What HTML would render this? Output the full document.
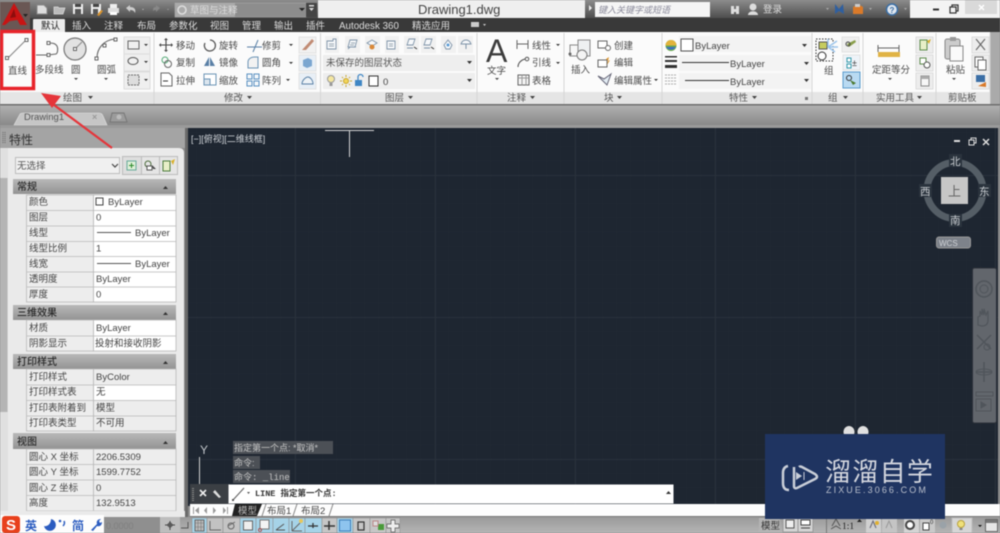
<!DOCTYPE html>
<html lang="zh"><head><meta charset="utf-8"><title>Drawing1.dwg</title>
<style>
html,body{margin:0;padding:0;width:1000px;height:533px;overflow:hidden;background:#8a8a8a}
svg{display:block;filter:blur(.55px)}
text{font-family:"Liberation Sans","Noto Sans CJK SC",sans-serif;font-size:9.5px;fill:#3a3a3a}
.t{fill:#ddd;font-size:9.5px}.k{fill:#4a4a4a;font-size:9.5px}
.p{fill:#555;font-size:9.5px}.h{fill:#2a2a2a;font-size:10px;font-weight:500}
.v{fill:#444;font-size:9.5px}.m{font-family:"Liberation Mono","Noto Sans CJK SC",monospace}
</style></head><body>
<svg width="1000" height="533" viewBox="0 0 1000 533" xmlns="http://www.w3.org/2000/svg">
<defs>
<linearGradient id="g1" x1="0" y1="0" x2="0" y2="1"><stop offset="0" stop-color="#8c8c8c"/><stop offset="1" stop-color="#4e4e4e"/></linearGradient>
<linearGradient id="g2" x1="0" y1="0" x2="0" y2="1"><stop offset="0" stop-color="#b0b0b0"/><stop offset="1" stop-color="#888"/></linearGradient>
<linearGradient id="g3" x1="0" y1="0" x2="0" y2="1"><stop offset="0" stop-color="#b8b8b8"/><stop offset="1" stop-color="#939393"/></linearGradient>
<linearGradient id="g4" x1="0" y1="0" x2="0" y2="1"><stop offset="0" stop-color="#9a9a9a"/><stop offset="1" stop-color="#b5b5b5"/></linearGradient>
<pattern id="minor" width="14" height="14.2" patternUnits="userSpaceOnUse" x="15" y="5"><path d="M14 0V14.2M0 14.2H14" stroke="#232b35" stroke-width=".5" fill="none"/></pattern>
<pattern id="major" width="140" height="142" patternUnits="userSpaceOnUse" x="15" y="33"><path d="M.5 0V142M0 .5H140" stroke="#29313c" stroke-width="1" fill="none"/></pattern>
</defs>

<!-- base -->
<rect width="1000" height="533" fill="#8c8c8c"/>
<!-- title bar -->
<rect x="0" width="1000" height="18" fill="url(#g1)"/>
<rect x="318" width="267" height="18" fill="#efefef"/>
<rect x="910" width="90" height="18" fill="#f3f3f3"/>
<rect x="965" y="0" width="32" height="14" fill="#d9d9d9"/>
<text x="418" y="14" style="font-size:13px;fill:#444">Drawing1.dwg</text>
<!-- tab bar -->
<rect x="30" y="18" width="970" height="14" fill="#393939"/>
<!-- qat -->
<path d="M37 5h7l3 3v6H37z" fill="#ddd" stroke="#888"/>
<path d="M54 7h4l1 1h6l-2 6H54z" fill="#bbb" stroke="#ddd" stroke-width=".7"/>
<rect x="73" y="4" width="10" height="10" fill="#eee"/><rect x="75" y="4" width="6" height="3" fill="#444"/><rect x="75" y="9" width="6" height="5" fill="#555"/>
<rect x="91" y="4" width="10" height="10" fill="#eee"/><rect x="93" y="4" width="6" height="3" fill="#444"/><rect x="93" y="9" width="5" height="5" fill="#555"/><path d="M97 15l4-5 2 1-4 5z" fill="#d9922a"/>
<path d="M108 8h11v5h-11z" fill="#ddd"/><rect x="110" y="4" width="7" height="4" fill="#eee"/><rect x="110" y="12" width="7" height="3" fill="#fff"/>
<path d="M126 8l4-3v2c5 0 6 3 5 6-1-2-2-3-5-3v2z" fill="#ccc"/><path d="M142 9l2 0-1 1z" fill="#ccc"/>
<path d="M160 8l-4-3v2c-3 0-3 2-3 4 1-1 2-1 3-1v2z" fill="#888"/><path d="M167 9l2 0-1 1z" fill="#aaa"/>
<rect x="175" y="3" width="131" height="14" fill="#8d8d8d" stroke="#aaa" stroke-width=".6"/><rect x="175" y="3" width="60" height="14" fill="#aaa"/>
<circle cx="182" cy="10" r="4" fill="none" stroke="#ddd" stroke-width="1.6"/>
<text x="190" y="13.5" style="fill:#ddd;font-size:9.5px">草图与注释</text>
<path d="M299 8h6l-3 3z" fill="#222"/>
<rect x="306" y="3" width="11" height="14" fill="#444"/><path d="M309 5h5v1.5h-5zM309 8h5l-2.500 3z" fill="#ddd"/>
<!-- logo -->
<rect x="0" y="0" width="30" height="30" fill="#6a5754"/><rect x="0" y="0" width="30" height="2" fill="#8a8a8a"/>
<path d="M14 3L27 25H20L17.500 20L10 21L5 25H2z" fill="#c81414"/><path d="M14 9L10 18L16 17z" fill="#8e0d0d"/>
<path d="M23 14h5l-2.500 3z" fill="#222"/>
<!-- search -->
<rect x="585" y="0" width="325" height="18" fill="url(#g1)"/>
<path d="M589 5l3 3-3 3z" fill="#eee"/>
<rect x="595" y="2" width="115" height="15" fill="#f5f5f5"/>
<text x="598" y="13" style="font-size:9px;fill:#8a8a9a;font-style:italic">键入关键字或短语</text>
<path d="M731 6h3v8h-3zM736 6h3v8h-3zM733 9h4v3h-4z" fill="#ddd"/>
<circle cx="753" cy="7" r="3.500" fill="#ddd"/><path d="M748 15c0-5 10-5 10 0z" fill="#ddd"/>
<text x="763" y="12.500" style="fill:#ddd;font-size:9.500px">登录</text>
<path d="M826 8h3l-1.500 2z" fill="#aaa"/>
<path d="M835 4l4 5 4-5 1 10-5-3-4 3z" fill="#2f5f9f"/>
<path d="M853 7l5-3 5 3v7h-10z" fill="#d97a2a"/><rect x="855" y="4" width="5" height="3" fill="#ccc"/>
<path d="M869 8h3l-1.500 2z" fill="#aaa"/>
<circle cx="892" cy="9.500" r="5.500" fill="#dfe6ee" stroke="#3a6ea5" stroke-width="1.500"/><text x="889.500" y="13" style="font-size:8px;font-weight:700;fill:#3a6ea5">?</text>
<path d="M904 8h3l-1.500 2z" fill="#aaa"/>
<rect x="933" y="8.500" width="6" height="2" fill="#333"/>
<rect x="952" y="5" width="6" height="6" fill="none" stroke="#333" stroke-width="1.200"/><rect x="950" y="7" width="6" height="6" fill="#f3f3f3" stroke="#333" stroke-width="1.200"/>
<path d="M979 5l5 5M984 5l-5 5" stroke="#fff" stroke-width="1.500"/>

<!-- tabs -->
<path d="M33 32v-12q0-1 1-1h30q1 0 1 1v12z" fill="#ececec"/>
<text x="41" y="29" style="fill:#222;font-size:9.500px">默认</text>
<text x="72" y="29" class="t">插入</text><text x="104" y="29" class="t">注释</text><text x="137" y="29" class="t">布局</text>
<text x="169" y="29" class="t">参数化</text><text x="210" y="29" class="t">视图</text><text x="242" y="29" class="t">管理</text>
<text x="274" y="29" class="t">输出</text><text x="306" y="29" class="t">插件</text>
<text x="339" y="29" class="t" style="font-size:9.800px">Autodesk 360</text><text x="412" y="29" class="t">精选应用</text>
<rect x="471" y="22" width="8" height="5" fill="#ccc"/><path d="M483 24h3l-1.500 2z" fill="#ccc"/>

<!-- ribbon -->
<rect x="0" y="32" width="1000" height="73" fill="#fbfbfb"/>
<rect x="0" y="92" width="990" height="13" fill="#e5e5e5"/>
<rect x="990" y="32" width="10" height="73" fill="#aaa"/>
<rect x="0" y="104" width="1000" height="1.500" fill="#6f6f6f"/>
<path d="M154 33v71M320.500 33v71M477 33v71M564 33v71M662 33v71M812 33v71M863 33v71M936 33v71M990 33v71" stroke="#d5d5d5"/>
<text x="63" y="101" class="p">绘图</text><path d="M88 96h5l-2.500 3z" fill="#444"/>
<text x="224" y="101" class="p">修改</text><path d="M247 96h5l-2.500 3z" fill="#444"/>
<text x="385" y="101" class="p">图层</text><path d="M408 96h5l-2.500 3z" fill="#444"/>
<text x="507" y="101" class="p">注释</text><path d="M530 96h5l-2.500 3z" fill="#444"/>
<text x="604" y="101" class="p">块</text><path d="M617 96h5l-2.500 3z" fill="#444"/>
<text x="729" y="101" class="p">特性</text><path d="M752 96h5l-2.500 3z" fill="#444"/><rect x="805" y="97" width="3" height="3" fill="#777"/>
<text x="828" y="101" class="p">组</text><path d="M843 96h5l-2.500 3z" fill="#444"/>
<text x="876" y="101" class="p">实用工具</text><path d="M917 96h5l-2.500 3z" fill="#444"/>
<text x="948" y="101" class="p">剪贴板</text>

<!-- draw panel -->
<path d="M8 58L26 40" stroke="#888" stroke-width="1.100"/><rect x="5.500" y="56.500" width="3" height="3" fill="#fff" stroke="#666"/><rect x="25" y="38.500" width="3" height="3" fill="#fff" stroke="#666"/>
<text x="8" y="74" class="k">直线</text>
<path d="M36 55h12l8-1c2-1 2-6 1-8-2-3-5-3-8-3" fill="none" stroke="#666" stroke-width="1.100"/>
<rect x="47" y="41.500" width="3" height="3" fill="#fff" stroke="#666"/><rect x="47" y="53.500" width="3" height="3" fill="#fff" stroke="#666"/>
<text x="35" y="73" class="k">多段线</text>
<circle cx="75" cy="49" r="11" fill="#e2e2e2" stroke="#777" stroke-width="1.200"/><path d="M75 49l7-7" stroke="#888"/><rect x="73.500" y="47.500" width="3" height="3" fill="#fff" stroke="#666"/>
<text x="71" y="73" class="k">圆</text><path d="M74 78h4l-2 2z" fill="#444"/>
<path d="M97 58c0-10 7-18 18-19" fill="none" stroke="#666" stroke-width="1.100"/><rect x="95" y="57" width="3" height="3" fill="#fff" stroke="#666"/><rect x="114" y="38" width="3" height="3" fill="#fff" stroke="#666"/><rect x="103" y="44" width="3" height="3" fill="#fff" stroke="#666"/>
<text x="97" y="73" class="k">圆弧</text><path d="M104 78h4l-2 2z" fill="#444"/>
<rect x="124" y="37" width="26" height="17" fill="#efefef" stroke="#ddd"/><rect x="128" y="41" width="11" height="8" fill="none" stroke="#666"/><path d="M144 44h4l-2 2z" fill="#333"/>
<rect x="124" y="54" width="26" height="17" fill="#efefef" stroke="#ddd"/><ellipse cx="133" cy="61" rx="5" ry="3.500" fill="none" stroke="#555"/><path d="M144 61h4l-2 2z" fill="#333"/>
<rect x="124" y="72" width="26" height="17" fill="#efefef" stroke="#ddd"/><rect x="128" y="75" width="11" height="10" fill="#ddd" stroke="#666" stroke-dasharray="2 1"/><path d="M144 79h4l-2 2z" fill="#333"/>

<!-- modify -->
<path d="M166 40v10M161 45h10" stroke="#444" stroke-width="1.100"/><path d="M166 38l2 2h-4zM166 52l2-2h-4zM159 45l2-2v4zM173 45l-2-2v4z" fill="#444"/>
<text x="176" y="49" class="k">移动</text>
<circle cx="165" cy="60" r="3" fill="none" stroke="#5a7"/><circle cx="168" cy="64" r="3.500" fill="none" stroke="#666"/>
<text x="176" y="66" class="k">复制</text>
<path d="M161 73h8l3 3v10h-11z" fill="#fff" stroke="#666"/><path d="M163 81h5" stroke="#333"/>
<text x="176" y="84" class="k">拉伸</text>
<path d="M210 40a5.500 5.500 0 1 1-5 3" fill="none" stroke="#555" stroke-width="1.300"/>
<text x="219" y="49" class="k">旋转</text>
<path d="M209 57l-5 9h5zM210 57l5 9h-5z" fill="#5a80a6"/>
<text x="219" y="66" class="k">镜像</text>
<rect x="204" y="74" width="12" height="11" fill="#fff" stroke="#6a93b5"/><rect x="204" y="79" width="6" height="6" fill="#dbe5ee" stroke="#6a93b5"/>
<text x="219" y="84" class="k">缩放</text>
<path d="M247 47h15M258 40l-5 12" stroke="#5a80a6" fill="none"/>
<text x="262" y="49" class="k">修剪</text><path d="M289 44h4l-2 2z" fill="#333"/>
<path d="M248 68v-6c0-3 3-5 6-5h4v11z" fill="#f2f2f2" stroke="#6a93b5"/>
<text x="262" y="66" class="k">圆角</text><path d="M289 62h4l-2 2z" fill="#333"/>
<path d="M247 74h5v5h-5zM254 74h5v5h-5zM247 81h5v5h-5zM254 81h5v5h-5z" fill="#f4f8fb" stroke="#5a90c0"/>
<text x="262" y="84" class="k">阵列</text><path d="M286 79h4l-2 2z" fill="#333"/>
<rect x="299" y="37" width="17" height="16" fill="#f1f1f1" stroke="#e2e2e2"/><path d="M302 50l10-11 2 2-8 9z" fill="#c08a72"/>
<rect x="299" y="55" width="17" height="16" fill="#e8eff6" stroke="#e2e2e2"/><path d="M303 60l5-2 4 2v6l-5 2-4-2z" fill="#7ba6d0"/>
<rect x="299" y="73" width="17" height="16" fill="#e8eff6" stroke="#e2e2e2"/><path d="M302 84c0-4 4-7 6-7s5 3 5 7z" fill="#eef3f7" stroke="#5a80a6"/>

<!-- layer -->
<g fill="#f1f1f1"><rect x="325" y="36" width="14" height="17"/><rect x="345" y="36" width="15" height="17"/><rect x="365" y="36" width="15" height="17"/><rect x="385" y="36" width="14" height="17"/><rect x="404" y="36" width="15" height="17"/><rect x="421" y="36" width="15" height="17"/><rect x="441" y="36" width="15" height="17"/><rect x="458" y="36" width="15" height="17"/></g>
<g fill="#f7f9fb" stroke="#7e93a8" stroke-width=".9">
<path d="M327 41h6v-2h3v10h-9z"/><path d="M348 47l2-7h7l-2 7zM348 49l2-2h6"/><path d="M367 43l5-3 5 3-5 3z"/><path d="M387 41h8v8h-8z"/><path d="M407 45l2-6h6l-2 6zM407 48h6"/><path d="M424 45l2-6h6l-2 6zM424 48h6"/><path d="M444 45l4-5 4 5-2 4h-4z"/><path d="M461 44c1-3 3-4 5-4s4 1 5 4z"/>
</g>
<path d="M329 44h5M329 46h5M351 43h4M350 45h4M389 44h4M389 46h4" stroke="#7a8a9a" stroke-width=".7"/>
<circle cx="372" cy="47" r="2.500" fill="#d9893a"/><path d="M414 47l3 2M431 47l3 2" stroke="#333"/><circle cx="448" cy="45" r="1.500" fill="#5a9bd5"/><path d="M466 44v5" stroke="#7e93a8"/>
<rect x="323" y="55" width="152" height="16" fill="#eeeeee"/>
<text x="326" y="66" style="font-size:9.500px;fill:#555">未保存的图层状态</text>
<path d="M467 61h5l-2.500 3z" fill="#333"/>
<rect x="323" y="73" width="152" height="16" fill="#eeeeee"/>
<circle cx="331" cy="79" r="3.500" fill="#f4e6a0" stroke="#999"/><rect x="329.500" y="83" width="3" height="3" fill="#999"/>
<circle cx="346" cy="81" r="2.500" fill="#f3d65a" stroke="#c9a52a"/><path d="M346 75v2M346 85v2M340 81h2M350 81h2M342 77l1 1M349 84l1 1M342 85l1-1M349 78l1-1" stroke="#c9a52a"/>
<rect x="355" y="80" width="7" height="6" fill="#3f86c4"/><path d="M358 80v-3a2.500 2.500 0 0 1 5 0" fill="none" stroke="#3f86c4" stroke-width="1.200"/>
<rect x="369" y="76" width="9" height="10" fill="#fff" stroke="#333"/>
<text x="383" y="85" style="font-size:9.500px;fill:#444">0</text><path d="M467 79h5l-2.500 3z" fill="#333"/>

<!-- annotate -->
<text x="486" y="62" style="font-size:32px;fill:#3c3c3c">A</text>
<text x="487" y="74" class="k">文字</text><path d="M495 78h4l-2 2z" fill="#444"/>
<path d="M517 40v9M528 40v9M517 44h11" stroke="#666" fill="none"/><text x="532" y="49" class="k">线性</text><path d="M556 44h4l-2 2z" fill="#333"/>
<path d="M518 67c0-4 3-7 7-8" fill="none" stroke="#555" stroke-width="1.100"/><circle cx="527" cy="59" r="1.800" fill="none" stroke="#555"/><text x="532" y="66" class="k">引线</text><path d="M556 62h4l-2 2z" fill="#333"/>
<rect x="518" y="75" width="11" height="10" fill="#f4f4f4" stroke="#666"/><path d="M518 78h11M522 75v10M526 75v10" stroke="#999"/><text x="532" y="84" class="k">表格</text>

<!-- block -->
<rect x="570" y="45" width="19" height="11" fill="#f7f7f7" stroke="#888"/><rect x="578" y="40" width="12" height="16" fill="#eef0f2" stroke="#888"/><circle cx="582" cy="55" r="5" fill="#f4f4f4" stroke="#777"/><circle cx="570" cy="54" r="1.500" fill="#666"/>
<text x="571" y="73" class="k">插入</text>
<rect x="598" y="41" width="9" height="7" fill="#fff" stroke="#666"/><circle cx="608" cy="48" r="2.500" fill="#fff" stroke="#666"/><text x="614" y="49" class="k">创建</text>
<rect x="598" y="60" width="9" height="7" fill="#fff" stroke="#666"/><path d="M606 59l3-2-1 4 2-1-3 5 1-4z" fill="#d9922a"/><text x="614" y="66" class="k">编辑</text>
<path d="M598 76l6 3 7-5-4 11z" fill="#e3ecf3" stroke="#667"/><text x="614" y="84" class="k">编辑属性</text><path d="M654 79h4l-2 2z" fill="#333"/>

<!-- properties -->
<circle cx="671" cy="45.500" r="5.500" fill="#6aa84f"/><path d="M665.500 45.500a5.500 5.500 0 0 1 11 0z" fill="#e2b33a"/><path d="M666 47a6 6 0 0 0 10 0z" fill="#3b6fc4"/>
<rect x="679" y="36" width="132" height="16" fill="#f3f3f3"/>
<rect x="681" y="39" width="12" height="12" fill="#fff" stroke="#555"/>
<text x="695" y="49" class="v">ByLayer</text><path d="M802 44h5l-2.500 3z" fill="#333"/>
<path d="M665 56h12v1.500h-12zM665 60h12v2h-12zM665 65h12v3h-12z" fill="#333"/>
<rect x="679" y="55" width="132" height="16" fill="#f3f3f3"/>
<path d="M682 62.500h47" stroke="#333"/>
<text x="730" y="67" class="v">ByLayer</text><path d="M804 62h5l-2.500 3z" fill="#333"/>
<path d="M665 75h12M665 78h12M665 81h12M665 84h12" stroke="#aaa" stroke-dasharray="2 1"/>
<rect x="679" y="73" width="132" height="16" fill="#f3f3f3"/>
<path d="M685 80.500h44" stroke="#333"/>
<text x="730" y="85" class="v">ByLayer</text><path d="M804 79h5l-2.500 3z" fill="#333"/>

<!-- group -->
<rect x="816" y="39" width="17" height="22" fill="none" stroke="#333" stroke-dasharray="1.500 1.500"/>
<rect x="819" y="42" width="8" height="7" fill="#c6cc5e" stroke="#555"/><circle cx="822" cy="56" r="4" fill="#fff" stroke="#333"/>
<path d="M828 47l9-6M828 47l10 0M828 47l7 5M828 47l0-8" stroke="#9cc5ec" stroke-width="1.500"/>
<text x="824" y="74" class="k">组</text>
<rect x="842" y="37" width="17" height="15" fill="#eee" stroke="#e2e2e2"/><path d="M847 44l8-4 1 2-7 5z" fill="#8a9f4a"/><circle cx="848" cy="44" r="2" fill="none" stroke="#444"/>
<rect x="843" y="55" width="17" height="15" fill="#eef3f8" stroke="#e2e2e2"/><rect x="847" y="58" width="4" height="4" fill="#fff" stroke="#39a"/><rect x="847" y="64" width="4" height="4" fill="#fff" stroke="#39a"/><text x="852" y="66" style="font-size:9px">±</text>
<rect x="843" y="72" width="17" height="16" fill="#b9daf2" stroke="#5a9bcc"/><circle cx="849" cy="78" r="2.500" fill="none" stroke="#333"/><path d="M850 80l6 3-3 2z" fill="#4c7a2f"/>

<!-- utilities -->
<path d="M878 45v7M899 45v7M878 48h21" stroke="#666" fill="none"/><rect x="878" y="52" width="22" height="5" fill="#e0b345"/>
<text x="872" y="73" class="k">定距等分</text><path d="M888 78h4l-2 2z" fill="#444"/>
<rect x="916" y="37" width="17" height="16" fill="#ededed" stroke="#ddd"/><rect x="920" y="40" width="7" height="10" fill="#e8efc8" stroke="#5b8a4a"/><path d="M927 41l4-2-2 5z" fill="#d9b02a"/>
<rect x="916" y="55" width="17" height="16" fill="#ededed" stroke="#ddd"/><rect x="920" y="58" width="6" height="6" fill="#fff" stroke="#5b8a4a"/><circle cx="927" cy="65" r="3" fill="#fff" stroke="#555"/>
<rect x="916" y="73" width="17" height="16" fill="#ededed" stroke="#ddd"/><rect x="921" y="76" width="8" height="10" fill="#f7f7f7" stroke="#888"/><rect x="921" y="76" width="8" height="3" fill="#aaa"/>

<!-- clipboard -->
<rect x="945" y="39" width="15" height="20" rx="2" fill="#ccc" stroke="#888"/><rect x="950" y="37" width="6" height="4" fill="#999"/><rect x="950" y="46" width="13" height="15" fill="#fafafa" stroke="#888"/>
<text x="946" y="73" class="k">粘贴</text><path d="M952 78h4l-2 2z" fill="#444"/>
<rect x="972" y="37" width="17" height="16" fill="#ededed" stroke="#ddd"/><path d="M976 39l9 11M985 39l-9 11" stroke="#666" stroke-width="1.100"/>
<rect x="972" y="55" width="17" height="16" fill="#ededed" stroke="#ddd"/><rect x="975" y="57" width="8" height="10" fill="#fff" stroke="#666"/><rect x="978" y="60" width="8" height="10" fill="#fff" stroke="#666"/>
<rect x="972" y="73" width="17" height="16" fill="#ededed" stroke="#ddd"/><rect x="976" y="75" width="9" height="7" fill="#3a6ea5"/><path d="M978 86l8-4 0 5z" fill="#d97a2a"/>

<!-- file tabs -->
<rect x="0" y="105.500" width="1000" height="20" fill="url(#g2)"/>
<rect x="0" y="125" width="1000" height="3" fill="#9a9a9a"/>
<path d="M14 125l6-11q1-1 3-1h76q3 0 4 3l4 9z" fill="#c6c6c6" stroke="#e2e2e2" stroke-width=".6"/>
<text x="24" y="120" style="font-size:9.500px;fill:#555">Drawing1</text>
<text x="92" y="120" style="font-size:9px;fill:#999;font-weight:700">×</text>
<path d="M110 122l2-9h12l3 9z" fill="#9b9b9b" stroke="#777"/><circle cx="119" cy="117" r="2.500" fill="#bbb"/>

<!-- canvas -->
<rect x="188" y="128" width="810" height="378" fill="#1e2631"/>
<rect x="188" y="128" width="810" height="378" fill="url(#minor)"/>
<rect x="188" y="128" width="810" height="378" fill="url(#major)"/>
<path d="M325 130.500h49M349.500 130v27" stroke="#d5d5d5"/>
<text x="191" y="142" style="font-size:9px;fill:#cfd3d8">[−][俯视][二维线框]</text>
<rect x="954" y="140" width="6" height="2" fill="#ddd"/>
<rect x="971" y="138" width="5" height="5" fill="none" stroke="#ddd"/><rect x="969" y="140" width="5" height="5" fill="#1e2631" stroke="#ddd"/>
<path d="M983 139l6 6M989 139l-6 6" stroke="#ddd" stroke-width="1.500"/>
<circle cx="955" cy="190.500" r="28" fill="none" stroke="#555e66" stroke-width="7"/>
<rect x="941" y="177" width="27" height="27" fill="#c6c6c6"/>
<text x="948" y="196" style="font-size:13px;fill:#666">上</text>
<rect x="949" y="154" width="13" height="13" fill="#2a333d"/><text x="950" y="165" style="font-size:10.500px;fill:#c9cdd1">北</text>
<rect x="949" y="214" width="13" height="13" fill="#2a333d"/><text x="950" y="224" style="font-size:10.500px;fill:#c9cdd1">南</text>
<rect x="919" y="184" width="13" height="13" fill="#2a333d"/><text x="920" y="195" style="font-size:10.500px;fill:#c9cdd1">西</text>
<rect x="978" y="184" width="13" height="13" fill="#2a333d"/><text x="979" y="195" style="font-size:10.500px;fill:#c9cdd1">东</text>
<rect x="936.500" y="237" width="34" height="11" rx="2.500" fill="#7d828a" stroke="#999"/>
<text x="939" y="246" style="font-size:8px;fill:#cfd2d6">WCS</text>
<!-- nav bar -->
<rect x="972.500" y="268" width="24" height="155" rx="2" fill="#62666c" stroke="#2b3038"/>
<g fill="none" stroke="#50555b">
<circle cx="984" cy="289" r="8" stroke-width="1.500"/><circle cx="984" cy="289" r="4"/>
<path d="M978 325v-8l2-1v-5l2 4v-6l2 6v-6l2 6 2-4v9c0 5-3 6-6 6-2 0-3-1-4-1z" stroke-width="1.200"/>
<path d="M977 335l14 14M991 335l-14 14" stroke-width="1.500"/><circle cx="987" cy="347" r="3"/>
<path d="M984 362v20M976 372h16" stroke-width="1.500"/><ellipse cx="984" cy="372" rx="8" ry="3"/>
<rect x="976" y="392" width="17" height="4"/><rect x="976" y="399" width="15" height="12"/><path d="M981 402v6l5-3z" fill="#50555b"/>
</g>
<!-- ucs + history -->
<text x="200" y="454" style="font-size:12px;fill:#bfc4c8">Y</text>
<path d="M199.500 457v30" stroke="#d0d0d0"/>
<rect x="233" y="441" width="100" height="13" fill="#4c5056"/><text x="234" y="451" style="font-size:9px;fill:#c4c4c4">指定第一个点: *取消*</text>
<rect x="233" y="456" width="27" height="13" fill="#4c5056"/><text x="234" y="466" style="font-size:9px;fill:#c4c4c4">命令:</text>
<rect x="233" y="470" width="57" height="13" fill="#4c5056"/><text x="234" y="480" class="m" style="font-size:9px;fill:#c4c4c4">命令: _line</text>
<!-- command line -->
<rect x="190" y="484" width="40" height="20" fill="#3b3f44"/>
<path d="M193 488v13" stroke="#888" stroke-dasharray="1 1" stroke-width="2"/>
<path d="M200 490l6 6M206 490l-6 6" stroke="#eee" stroke-width="1.600"/>
<path d="M215 490l6 7-2 1-6-6z" fill="#ddd"/>
<rect x="228.500" y="484.500" width="445" height="19" fill="#fff"/>
<path d="M233 500l11-12" stroke="#666" stroke-width="1.100"/><rect x="232" y="499" width="2" height="2" fill="#555"/><path d="M247 492h3l-1.500 2z" fill="#555"/>
<text x="255" y="496" class="m" style="font-size:8.500px;fill:#333;font-weight:700">LINE 指定第一个点:</text>
<path d="M666 494h5l-2.500-3z" fill="#333"/>

<!-- layout tabs -->
<rect x="190" y="504" width="810" height="13" fill="#fdfdfd"/>
<rect x="190" y="516" width="810" height="1" fill="#777"/>
<g fill="#999"><path d="M193 507v7h1v-7zM199 507l-4 3.500 4 3.500zM207 507l-3 3.500 3 3.500zM213 507l3 3.500-3 3.500zM223 507l3 3.500-3 3.500zM227 507v7h1v-7z"/></g>
<path d="M232 516l3-12h27l-5 12z" fill="#222"/>
<text x="238" y="514" style="font-size:9.500px;fill:#bbb">模型</text>
<path d="M262 516l4-12M293 516l4-12M329 516l4-12" stroke="#888" fill="none"/>
<text x="267" y="514" style="font-size:9.500px;fill:#444">布局1</text><text x="301" y="514" style="font-size:9.500px;fill:#444">布局2</text>

<!-- properties palette -->
<rect x="0" y="128" width="185" height="20" fill="#a4a4a4"/>
<rect x="185" y="128" width="3" height="389" fill="#6a6a6a"/>
<path d="M3 132v11M5 132v11" stroke="#666" stroke-dasharray="1 1"/>
<text x="9" y="144" style="font-size:12px;fill:#333">特性</text>
<path d="M0 150q0-2 4-2h175q5 0 5 5v364H0z" fill="#eaeaea"/>
<rect x="0" y="148" width="8" height="369" fill="#e0e0e0"/>
<rect x="0" y="178" width="7.500" height="234" fill="#b4b4b4"/>
<rect x="15.500" y="157.500" width="104" height="16" fill="#f0f0f0" stroke="#bdbdbd"/>
<text x="17" y="169" style="font-size:9.500px;fill:#555">无选择</text>
<path d="M112 164l3 3 3-3" fill="none" stroke="#444" stroke-width="1.200"/>
<rect x="122.500" y="156.500" width="19" height="18" fill="#dedede" stroke="#bbb"/><rect x="141.500" y="156.500" width="18" height="18" fill="#e5e5e5" stroke="#bbb"/><rect x="159.500" y="156.500" width="18" height="18" fill="#e5e5e5" stroke="#bbb"/>
<rect x="127" y="161" width="9" height="9" fill="#dfefd8" stroke="#6a9"/><path d="M129 165.500h5M131.500 163v5" stroke="#2a8a2a"/>
<circle cx="148" cy="164" r="3" fill="none" stroke="#4a6a3a"/><rect x="147" y="166" width="5" height="4" fill="#fff" stroke="#555"/><path d="M152 165l4 4-3 0z" fill="#444"/>
<rect x="163" y="161" width="7" height="10" fill="#e8efc8" stroke="#4b7a3a"/><path d="M171 161l4-2-2 6z" fill="#d9b02a"/>

<!-- section headers -->
<g fill="url(#g3)">
<rect x="13" y="179" width="163" height="15"/><rect x="13" y="305" width="163" height="15"/><rect x="13" y="354" width="163" height="15"/><rect x="13" y="433" width="163" height="16"/>
</g>
<text x="17" y="190" class="h">常规</text><text x="17" y="316" class="h">三维效果</text><text x="17" y="365" class="h">打印样式</text><text x="17" y="445" class="h">视图</text>
<g fill="#333"><path d="M163 189h5l-2.500-3zM163 315h5l-2.500-3zM163 364h5l-2.500-3zM163 444h5l-2.500-3z"/></g>
<!-- row fills -->
<g fill="#ededed" stroke="#b8b8b8" stroke-width=".8">
<rect x="26.500" y="195" width="67" height="107"/><rect x="26.500" y="320" width="67" height="31"/><rect x="26.500" y="369" width="67" height="62"/><rect x="26.500" y="449" width="67" height="62"/>
</g>
<g fill="#fff" stroke="#b8b8b8" stroke-width=".8">
<rect x="93.500" y="195" width="82.500" height="107"/><rect x="93.500" y="320" width="82.500" height="31"/>
</g>
<g fill="#ededed" stroke="#b8b8b8" stroke-width=".8"><rect x="93.500" y="369" width="82.500" height="62"/><rect x="93.500" y="449" width="82.500" height="62"/></g>
<rect x="94" y="385" width="81.500" height="15" fill="#fff"/>
<path d="M27 210.500h149M27 226h149M27 241.500h149M27 256.500h149M27 272h149M27 287h149M27 336h149M27 385h149M27 400.500h149M27 416h149M27 464.500h149M27 480h149M27 495.500h149" stroke="#b8b8b8" stroke-width=".8"/>
<g>
<text x="29" y="205" class="v">颜色</text><text x="29" y="220.500" class="v">图层</text><text x="29" y="236" class="v">线型</text><text x="29" y="251.500" class="v">线型比例</text><text x="29" y="267" class="v">线宽</text><text x="29" y="282" class="v">透明度</text><text x="29" y="297.500" class="v">厚度</text>
<text x="29" y="331" class="v">材质</text><text x="29" y="346.500" class="v">阴影显示</text>
<text x="29" y="380" class="v">打印样式</text><text x="29" y="395" class="v">打印样式表</text><text x="29" y="411" class="v">打印表附着到</text><text x="29" y="426" class="v">打印表类型</text>
<text x="29" y="460" class="v">圆心 X 坐标</text><text x="29" y="475" class="v">圆心 Y 坐标</text><text x="29" y="491" class="v">圆心 Z 坐标</text><text x="29" y="506" class="v">高度</text>
</g>
<rect x="96" y="198" width="7" height="7" fill="#fff" stroke="#444"/><text x="108" y="205" class="v">ByLayer</text>
<text x="96" y="220.500" class="v">0</text>
<path d="M97 232.500h34" stroke="#555"/><text x="135" y="236" class="v">ByLayer</text>
<text x="96" y="251.500" class="v">1</text>
<path d="M97 263.500h34" stroke="#555"/><text x="135" y="267" class="v">ByLayer</text>
<text x="96" y="282" class="v">ByLayer</text><text x="96" y="297.500" class="v">0</text>
<text x="96" y="331" class="v">ByLayer</text><text x="95" y="346.500" class="v">投射和接收阴影</text>
<text x="96" y="380" class="v">ByColor</text><text x="96" y="395" class="v">无</text><text x="96" y="411" class="v">模型</text><text x="96" y="426" class="v">不可用</text>
<text x="96" y="460" class="v">2206.5309</text><text x="96" y="475" class="v">1599.7752</text><text x="96" y="491" class="v">0</text><text x="96" y="506" class="v">132.9513</text>
<rect x="0" y="511" width="185" height="6" fill="#eaeaea"/>

<!-- status bar -->
<rect x="104" y="517" width="896" height="16" fill="url(#g4)"/>
<rect x="104" y="517" width="56" height="16" fill="#8f8f8f"/>
<text x="106" y="529" style="font-size:9px;fill:#7f7f7f">0.0000</text>
<rect x="160" y="517" width="20" height="16" fill="#bdbdbd"/>
<path d="M165 525h10M170 521v9" stroke="#444"/><circle cx="170" cy="525" r="2" fill="none" stroke="#444"/>
<path d="M181 528h7v-6" fill="none" stroke="#555"/>
<g stroke="#8a8a8a" stroke-width=".5">
<rect x="192" y="518" width="15" height="15" fill="#a6d3e8"/><rect x="207" y="518" width="16" height="15" fill="#c2c2c2"/><rect x="223" y="518" width="17" height="15" fill="#c4c4c4"/>
<rect x="240" y="518" width="16" height="15" fill="#a6d3e8"/><rect x="256" y="518" width="17" height="15" fill="#a6d3e8"/><rect x="273" y="518" width="16" height="15" fill="#a6d3e8"/><rect x="289" y="518" width="16" height="15" fill="#a6d3e8"/><rect x="305" y="518" width="17" height="15" fill="#a6d3e8"/><rect x="322" y="518" width="15" height="15" fill="#c6c6c6"/><rect x="337" y="518" width="16" height="15" fill="#a6d3e8"/><rect x="353" y="518" width="17" height="15" fill="#c6c6c6"/><rect x="370" y="518" width="16" height="15" fill="#c6c6c6"/><rect x="386" y="518" width="14" height="15" fill="#c6c6c6"/>
</g>
<rect x="195" y="520" width="9" height="11" fill="#bbb" stroke="#555" stroke-width=".8"/><path d="M198 520v11M201 520v11M195 523h9M195 527h9" stroke="#777" stroke-width=".6"/>
<path d="M210 521v9h11" fill="none" stroke="#666"/>
<circle cx="231" cy="526" r="3" fill="none" stroke="#666"/><path d="M228 526l7-4" stroke="#666"/>
<rect x="243.500" y="521" width="9" height="9" fill="#eee" stroke="#666"/>
<rect x="260" y="520" width="9" height="9" fill="#f4f4f4" stroke="#777"/><circle cx="260" cy="530" r="1.500" fill="none" stroke="#a55"/>
<path d="M276 530l8-6M276 530h9" stroke="#555" fill="none"/>
<path d="M292 531v-10M292 531h10M292 531l8-8" stroke="#666" fill="none"/><circle cx="301" cy="521" r="2" fill="#e8c75a"/>
<path d="M308 526h10M313 523v5" stroke="#333" stroke-width="1.300"/>
<path d="M324 526h11M329 521v9" stroke="#333" stroke-width="1.500"/>
<rect x="339.500" y="520" width="11" height="11" fill="#8ec4ee" stroke="#3d7fbb"/>
<rect x="358" y="522" width="6" height="8" fill="none" stroke="#333" stroke-width="1.200"/>
<rect x="378" y="524" width="6" height="6" fill="#4a9a3a"/><rect x="373" y="521" width="5" height="5" fill="#ddd" stroke="#b88"/>
<path d="M391 520h4v4h4v4h-4v4h-4v-4h-4v-4h4z" fill="#eee" stroke="#555" stroke-width=".7"/>

<!-- right status -->
<rect x="759" y="518" width="21" height="15" fill="#b4b4b4"/><text x="761" y="529" style="font-size:9.500px;fill:#333">模型</text>
<rect x="783" y="518" width="15" height="14" fill="#d4d4d4" stroke="#999"/><rect x="786" y="520" width="8" height="8" fill="#eee" stroke="#555"/>
<rect x="798" y="518" width="15" height="14" fill="#d4d4d4" stroke="#999"/><rect x="801" y="520" width="9" height="5" fill="#fff" stroke="#444"/><path d="M801 528h9" stroke="#444"/>
<rect x="826" y="518" width="1" height="15" fill="#777"/>
<path d="M832 526l4-7 4 7M831 529l5-3 5 3" fill="none" stroke="#555"/>
<text x="842" y="529" style="font-family:'Liberation Serif',serif;font-size:9.500px;fill:#222">1:1</text><path d="M857 522h5l-2.500-3z" fill="#222"/>
<rect x="866" y="518" width="15" height="15" fill="#d0d0d0"/><path d="M870 528l3-7 3 7" fill="none" stroke="#667"/><circle cx="877" cy="523" r="2" fill="#e0b030"/>
<rect x="882" y="518" width="15" height="15" fill="#c4c4c4"/><path d="M886 528l3-7 3 7" fill="none" stroke="#999"/>
<rect x="904" y="518" width="15" height="15" fill="#d4d4d4"/><circle cx="910" cy="525" r="4" fill="#fff" stroke="#444" stroke-width="2"/>
<rect x="920" y="518" width="15" height="15" fill="#c9c9c9"/><rect x="923" y="523" width="6" height="7" fill="#fff" stroke="#444"/><text x="930" y="524" style="font-size:6px;fill:#333">0</text>
<circle cx="943" cy="525" r="3.500" fill="#9aa2a8"/>
<rect x="952" y="518" width="20" height="15" fill="#d6d6d6" stroke="#bbb"/><circle cx="961" cy="524" r="3.500" fill="#efe07a" stroke="#b9a13c"/><rect x="959.500" y="528" width="3" height="2" fill="#888"/>
<path d="M978 525h4l-2 2z" fill="#111"/>
<rect x="985.500" y="519.500" width="12" height="12" fill="#e6e6e6" stroke="#666"/><rect x="986" y="520" width="11" height="3" fill="#777"/>

<!-- IME -->
<rect x="0" y="515" width="104" height="18" fill="#fdfdfd"/>
<rect x="2" y="516" width="18" height="17" rx="3" fill="#e8401c"/>
<text x="6" y="530" style="font-size:15px;font-weight:700;fill:#fff">S</text>
<text x="25" y="530" style="font-size:12px;font-weight:700;fill:#2b5cc0">英</text>
<path d="M51 519a6 6 0 1 1-7 7c3 1 7-2 7-7z" fill="#2b5cc0"/>
<circle cx="60" cy="521" r="1.300" fill="#2b5cc0"/><path d="M64 521c1 2 0 4-1 5" fill="none" stroke="#2b5cc0" stroke-width="1.500"/>
<text x="72" y="530" style="font-size:12px;font-weight:700;fill:#2b5cc0">简</text>
<path d="M91 530l6-6c-1-3 1-5 4-5l-2 2 1 2 2-1c0 3-2 5-5 4l-4 5z" fill="#2b5cc0"/>

<!-- watermark -->
<ellipse cx="849" cy="432" rx="5.500" ry="6" fill="#e0e0e0"/><ellipse cx="863" cy="432" rx="5.500" ry="6" fill="#e0e0e0"/>
<rect x="765" y="434" width="180" height="85" fill="#1f3461"/>
<path d="M788 466q-5 1-5 7v10q0 7 6 7M794 467v19q0 3 3 2l18-9q4-2 0-5l-13-7q-2-1-3 0" fill="none" stroke="#c9ced8" stroke-width="2.500"/>
<path d="M796 472l6 4-6 4z" fill="#c9ced8"/><path d="M804 472v8" stroke="#c9ced8"/>
<text x="825" y="481" style="font-size:26px;fill:#d3d6de;letter-spacing:1.300px">溜溜自学</text>
<text x="826" y="493" style="font-size:9px;fill:#b9bfcc;letter-spacing:2.100px">ZIXUE.3066.COM</text>

<!-- annotation -->
<rect x="1.500" y="31.500" width="32" height="57" fill="none" stroke="#e8232a" stroke-width="3.500"/>
<path d="M112 148L50 102" stroke="#e5353a" stroke-width="2.200"/>
<path d="M41 93l20 3-9 12z" fill="#e5353a"/>
</svg>
</body></html>
